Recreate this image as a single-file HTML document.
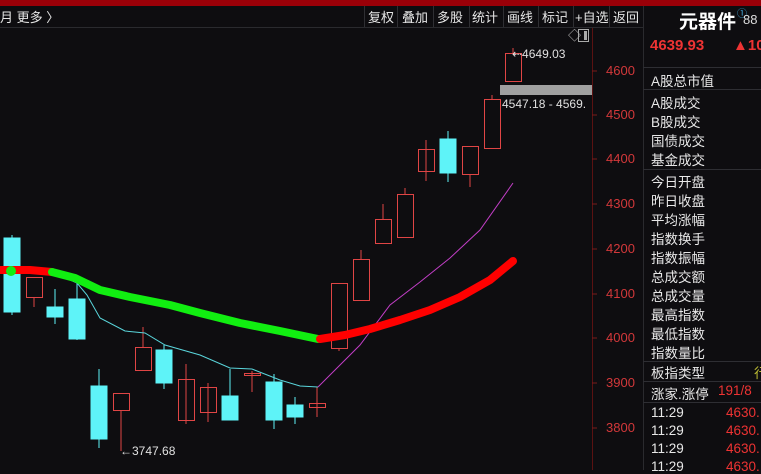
<!DOCTYPE html>
<html><head><meta charset="utf-8"><style>
body{margin:0;width:761px;height:470px;background:#0e0d10;overflow:hidden;font-family:"Liberation Sans","Noto Sans CJK SC",sans-serif;position:relative}
.top{position:absolute;left:0;top:0;width:761px;height:6px;background:#9a0008}
.tb{position:absolute;left:0;top:6px;width:643px;height:21px;background:#0e0d10;border-bottom:1px solid #2a2a2e}
.t{position:absolute;top:7px;font-size:13px;color:#e6e6e6;white-space:nowrap}
.sep{position:absolute;top:6px;width:1px;height:21px;background:#2f2f33}
.rp{position:absolute;left:643px;top:6px;width:118px;height:464px;border-left:1px solid #2a2a2e}
.r{position:absolute;left:651px;font-size:13.5px;color:#e8e8e8;white-space:nowrap}
.hl{position:absolute;left:643px;width:118px;height:1px;background:#2e2e33}
.ax{position:absolute;left:606px;font-size:13px;color:#d2383a}
</style></head><body>
<div class="top"></div>
<div class="tb"></div>
<div class="t" style="left:0">月 更多 〉</div>
<div class="sep" style="left:364px"></div><div class="t" style="left:368px">复权</div>
<div class="sep" style="left:397px"></div><div class="t" style="left:402px">叠加</div>
<div class="sep" style="left:433px"></div><div class="t" style="left:437px">多股</div>
<div class="sep" style="left:469px"></div><div class="t" style="left:472px">统计</div>
<div class="sep" style="left:503px"></div><div class="t" style="left:507px">画线</div>
<div class="sep" style="left:538px"></div><div class="t" style="left:542px">标记</div>
<div class="sep" style="left:573px"></div><div class="t" style="left:575px">+自选</div>
<div class="sep" style="left:609px"></div><div class="t" style="left:613px">返回</div>
<svg style="position:absolute;left:0;top:0" width="643" height="470">
<line x1="592.5" y1="28" x2="592.5" y2="470" stroke="#5a1212"/>
<g stroke="#7a1a1a"><line x1="592" y1="71" x2="597" y2="71"/><line x1="592" y1="115" x2="597" y2="115"/><line x1="592" y1="159" x2="597" y2="159"/><line x1="592" y1="204" x2="597" y2="204"/><line x1="592" y1="249" x2="597" y2="249"/><line x1="592" y1="294" x2="597" y2="294"/><line x1="592" y1="338" x2="597" y2="338"/><line x1="592" y1="383" x2="597" y2="383"/><line x1="592" y1="428" x2="597" y2="428"/></g>
<text x="568" y="40" fill="#bbb" font-size="13">◇</text>
<rect x="578.5" y="29.5" width="10" height="12" fill="none" stroke="#aaa"/><rect x="584" y="31" width="3" height="9" fill="#aaa"/>
<rect x="500" y="85" width="92" height="10" fill="#a0a0a0"/>
<g stroke="#5ef3f8" fill="#5ef3f8">
<line x1="12" y1="235" x2="12" y2="315"/><rect x="4" y="238" width="16" height="74"/>
<line x1="55" y1="289" x2="55" y2="324"/><rect x="47" y="307" width="16" height="10"/>
<line x1="77" y1="283" x2="77" y2="340"/><rect x="69" y="299" width="16" height="40"/>
<line x1="99" y1="369" x2="99" y2="448"/><rect x="91" y="386" width="16" height="53"/>
<line x1="164" y1="345" x2="164" y2="389"/><rect x="156" y="350" width="16" height="33"/>
<line x1="230" y1="369" x2="230" y2="420"/><rect x="222" y="396" width="16" height="24"/>
<line x1="274" y1="374" x2="274" y2="429"/><rect x="266" y="382" width="16" height="38"/>
<line x1="295" y1="397" x2="295" y2="424"/><rect x="287" y="405" width="16" height="12"/>
<line x1="448" y1="131" x2="448" y2="182"/><rect x="440" y="139" width="16" height="34"/>
</g>
<g stroke="#e04545" fill="none">
<line x1="34" y1="297" x2="34" y2="307"/><rect x="26.5" y="277.5" width="16" height="20"/>
<line x1="121" y1="410" x2="121" y2="451"/><rect x="113.5" y="393.5" width="16" height="17"/>
<line x1="143" y1="327" x2="143" y2="347"/><rect x="135.5" y="347.5" width="16" height="23"/>
<line x1="186" y1="364" x2="186" y2="424"/><rect x="178.5" y="379.5" width="16" height="41"/>
<line x1="208" y1="383" x2="208" y2="422"/><rect x="200.5" y="387.5" width="16" height="25"/>
<line x1="252" y1="371" x2="252" y2="392"/><rect x="244.5" y="373.5" width="16" height="2"/>
<line x1="317" y1="387" x2="317" y2="417"/><rect x="309.5" y="403.5" width="16" height="4"/>
<line x1="339" y1="348" x2="339" y2="351"/><rect x="331.5" y="283.5" width="16" height="65"/>
<line x1="361" y1="250" x2="361" y2="259"/><rect x="353.5" y="259.5" width="16" height="41"/>
<line x1="383" y1="204" x2="383" y2="219"/><rect x="375.5" y="219.5" width="16" height="24"/>
<line x1="405" y1="188" x2="405" y2="194"/><rect x="397.5" y="194.5" width="16" height="43"/>
<line x1="426" y1="140" x2="426" y2="181"/><rect x="418.5" y="149.5" width="16" height="22"/>
<line x1="470" y1="174" x2="470" y2="187"/><rect x="462.5" y="146.5" width="16" height="28"/>
<line x1="492" y1="95" x2="492" y2="99"/><rect x="484.5" y="99.5" width="16" height="49"/>
<line x1="513" y1="48" x2="513" y2="53"/><rect x="505.5" y="53.5" width="16" height="28"/>
</g>
<polyline fill="none" stroke="#5ad6dc" stroke-width="1" points="52,272 77,283 87,295 100,318 125,331 145,333 165,345 200,355 230,368 252,369 280,380 300,386 318,387"/>
<polyline fill="none" stroke="#c23ec6" stroke-width="1" points="318,387 340,365 360,345 390,305 420,282 450,258 480,230 513,183"/>
<polyline fill="none" stroke="#ff0000" stroke-width="8" stroke-linecap="round" stroke-linejoin="round" points="0,270 30,270 52,272"/>
<circle cx="11" cy="271" r="5" fill="#11ee11"/>
<polyline fill="none" stroke="#11ee11" stroke-width="8" stroke-linecap="round" stroke-linejoin="round" points="52,272 75,278 100,290 130,297 170,305 200,313 240,323 280,331 318,339"/>
<polyline fill="none" stroke="#ff0000" stroke-width="8" stroke-linecap="round" stroke-linejoin="round" points="320,339 345,335 370,329 400,320 430,310 460,297 490,280 513,261"/>
<text x="120" y="455" fill="#e0e0e0" font-size="12">←3747.68</text>
<text x="512" y="58" fill="#e0e0e0" font-size="12">⇠4649.03</text>
<text x="502" y="108" fill="#e0e0e0" font-size="12">4547.18 - 4569.</text>
</svg>
<div class="ax" style="top:63px">4600</div><div class="ax" style="top:107px">4500</div><div class="ax" style="top:151px">4400</div><div class="ax" style="top:196px">4300</div><div class="ax" style="top:241px">4200</div><div class="ax" style="top:286px">4100</div><div class="ax" style="top:330px">4000</div><div class="ax" style="top:375px">3900</div><div class="ax" style="top:420px">3800</div>
<div class="rp"></div>
<div style="position:absolute;left:679px;top:7px;font-size:19px;font-weight:bold;color:#fff">元器件</div>
<div style="position:absolute;left:737px;top:5px;font-size:10px;color:#4ad">①</div>
<div style="position:absolute;left:743px;top:12px;font-size:13px;color:#ddd">88</div>
<div style="position:absolute;left:650px;top:37px;font-size:15px;font-weight:bold;color:#e33">4639.93</div>
<div style="position:absolute;left:733px;top:37px;font-size:15px;font-weight:bold;color:#e33">▲10</div>
<div class="hl" style="top:67px"></div>
<div class="r" style="top:70px">A股总市值</div>
<div class="hl" style="top:89px"></div>
<div class="r" style="top:92px">A股成交</div>
<div class="r" style="top:111px">B股成交</div>
<div class="r" style="top:130px">国债成交</div>
<div class="r" style="top:149px">基金成交</div>
<div class="hl" style="top:169px"></div>
<div class="r" style="top:171px">今日开盘</div>
<div class="r" style="top:190px">昨日收盘</div>
<div class="r" style="top:209px">平均涨幅</div>
<div class="r" style="top:228px">指数换手</div>
<div class="r" style="top:247px">指数振幅</div>
<div class="r" style="top:266px">总成交额</div>
<div class="r" style="top:285px">总成交量</div>
<div class="r" style="top:304px">最高指数</div>
<div class="r" style="top:323px">最低指数</div>
<div class="r" style="top:342px">指数量比</div>
<div class="hl" style="top:361px"></div>
<div class="r" style="top:362px">板指类型</div>
<div class="r" style="top:362px;left:754px;color:#bb3">行</div>
<div class="hl" style="top:381px"></div>
<div class="r" style="top:383px">涨家.涨停</div>
<div class="r" style="top:383px;left:718px;color:#e33">191/8</div>
<div class="hl" style="top:402px"></div>
<div class="r" style="top:405px">11:29</div><div class="r" style="top:405px;left:726px;color:#e33">4630.</div>
<div class="r" style="top:423px">11:29</div><div class="r" style="top:423px;left:726px;color:#e33">4630.</div>
<div class="r" style="top:441px">11:29</div><div class="r" style="top:441px;left:726px;color:#e33">4630.</div>
<div class="r" style="top:459px">11:29</div><div class="r" style="top:459px;left:726px;color:#e33">4630.</div>
</body></html>
